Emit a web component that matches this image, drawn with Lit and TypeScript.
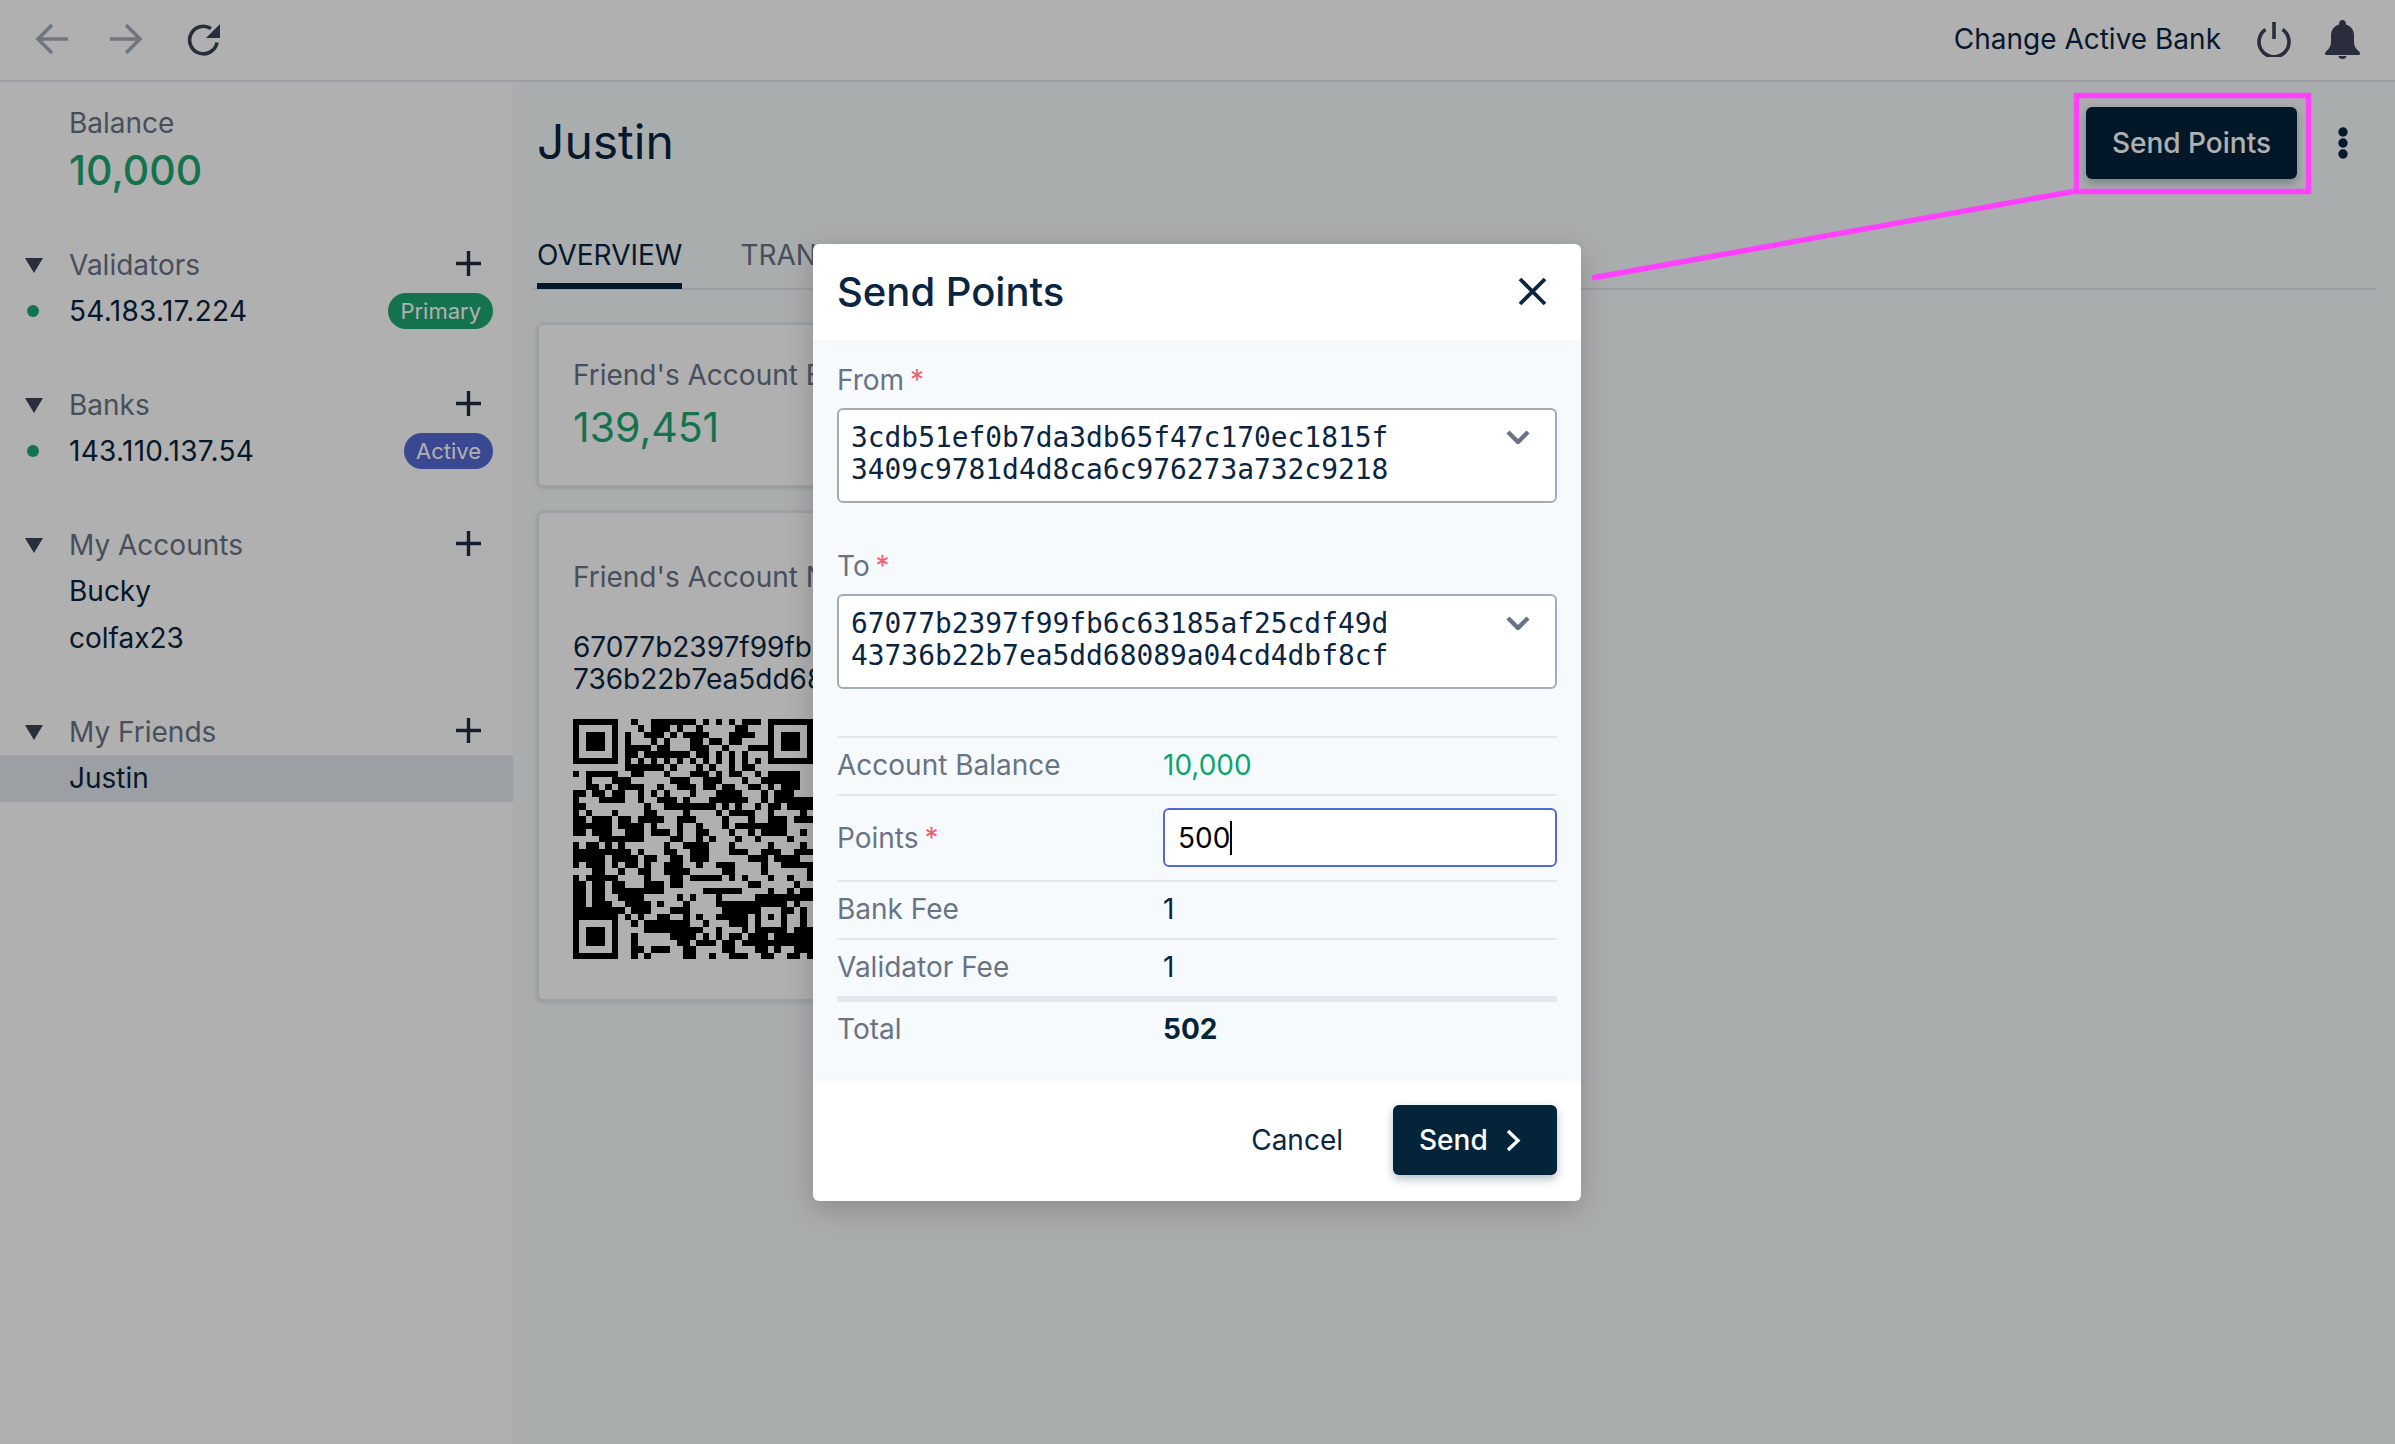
import { LitElement, html, css, svg } from "lit";
import { customElement } from "lit/decorators.js";

// QR modules, one entry per row, as column ranges
const QR_ROWS = [
  "0-6 9 12-18 20 22 24 26-28 30-36",
  "0 6 10 12-14 16 19 25-26 30 36",
  "0 2-4 6 8 11-13 15 17-20 24-27 30 32-34 36",
  "0 2-4 6 8 12 14 18-19 21-22 24-25 30 32-34 36",
  "0 2-4 6 8-11 13-14 18-20 23 27-29 30 32-34 36",
  "0 6 8-9 11-17 19-20 22 24 26 30 36",
  "0-6 8 10 12 14 16 18 20 22 24 26 28 30-36",
  "8-13 15 19 21 24 26-27",
  "0 2-6 9-10 14 18-20 22 24-25 28 30-34",
  "2 6-8 15-17 20-22 26 29-34",
  "2-3 5 7-10 13 16-18 20-21 23-24 27-28 30 32-34",
  "0-1 3-4 6-7 10 12 14 18 22-25 29 31-33",
  "0 4-7 10 13-15 17 21-26 29 31-36",
  "0-1 11 14-21 23 25 28 30-31 33-36",
  "0 2 6 11-12 17 22 24-27 30 35",
  "0-1 3-5 7-8 10-13 16-18 23 27 30-32 34-36",
  "0-5 7-10 12 16 19 23 25-32",
  "0-1 3-5 8-10 12-14 16 19-20 24 27 29-32 35",
  "4-10 15-16 19 21 25 28 33",
  "0 2-3 5 7 14 17-20 24 30 35",
  "0-8 10 14-15 18-20 24-26 29-31 34-36",
  "0-4 6-9 11-12 15-16 18-20 27-29 31-34",
  "0 2-4 6 8-9 11 14-16 19 22-24 29 32-36",
  "3-4 7 10-11 14-17 23-24 29 36",
  "0 2-6 11 15-16 18-22 24 26 30 33 36",
  "0-1 3-4 6-7 11-13 15-16 27-28 34",
  "0-1 3-4 6-13 20-25 30 33 35-36",
  "0-1 3-4 7-10 16 18 22 28-36",
  "0-1 3-5 8-11 13 17 22-32 34",
  "0-7 9-11 15-17 23-28 32-33 35",
  "0-6 8 10 13-14 17 19 22-26 28 30 32 35",
  "0 6 9 11-17 20 24-26 28 32 35",
  "0 2-4 6 11-19 22 26 28-32 34-36",
  "0 2-4 6 9 15-18 20 22 24-25 27-29 31-36",
  "0 2-4 6 9 16-17 19-21 23-24 26-36",
  "0 6 9-10 12-14 17-18 23-24 28-29 31 34-36",
  "0-6 9 11 17-18 21 24-26 29-30 33-34 36",
];

const qrPath = QR_ROWS.map((row, y) =>
  row
    .split(" ")
    .map((part) => {
      const [a, b] = part.split("-").map(Number);
      return `M${a} ${y}h${(b ?? a) - a + 1}v1h-${(b ?? a) - a + 1}z`;
    })
    .join("")
).join("");

const chevronDown = html`<svg class="chevron" width="24" height="14" viewBox="0 0 24 14">
  <path d="M2 2l10 10L22 2" fill="none" stroke="#697386" stroke-width="4.400" />
</svg>`;

const caretDown = html`<svg width="18" height="15" viewBox="0 0 18 15"><path d="M0 0h18L9 15z" fill="#3c4257" /></svg>`;

const plus = html`<svg class="plus" width="25" height="25" viewBox="0 0 25 25">
  <path d="M12.5 0v25M0 12.5h25" stroke="#1f2d40" stroke-width="3.400" />
</svg>`;

@customElement("app-root")
class AppRoot extends LitElement {
  static styles = css`
    :host {
      display: block;
      position: relative;
      width: 2395px;
      height: 1444px;
      overflow: hidden;
      background: #ffffff;
      color: #0a2540;
      font-family: Inter, "Liberation Sans", sans-serif;
      font-size: 28px;
      line-height: 32px;
    }
    * {
      box-sizing: border-box;
    }
    svg {
      display: block;
      flex: none;
    }
    .topbar {
      display: flex;
      align-items: center;
      height: 82px;
      padding: 0 35px 2px;
      border-bottom: 2px solid #e3e8ee;
    }
    .nav {
      display: flex;
      align-items: center;
      gap: 42px;
    }
    .nav .reload {
      margin-left: 2px;
    }
    .top-actions {
      display: flex;
      align-items: center;
      margin-left: auto;
    }
    .top-actions .power {
      margin-left: 36px;
    }
    .top-actions .bell {
      margin-left: 34px;
    }
    .layout {
      display: flex;
      height: 1362px;
    }
    .sidebar {
      width: 513px;
      flex: none;
      padding-top: 25px;
    }
    .balance {
      padding-left: 69px;
      margin-bottom: 44px;
    }
    .balance .label {
      color: #697386;
    }
    .balance .value {
      color: #1ea672;
      font-size: 41px;
      line-height: 56px;
      font-weight: 500;
      margin-top: 3px;
    }
    .group {
      margin-bottom: 47px;
    }
    .group-head {
      display: flex;
      align-items: center;
      height: 46px;
      padding: 0 32px 0 25px;
      color: #697386;
    }
    .group-head .name {
      margin-left: 26px;
    }
    .group-head .plus {
      margin-left: auto;
      margin-top: -4px;
    }
    .item {
      display: flex;
      align-items: center;
      height: 47px;
      padding: 0 20px 2px 69px;
    }
    .item.dotted {
      padding-left: 27px;
      letter-spacing: 0.3px;
    }
    .item.selected {
      background: #e3e8ee;
    }
    .dot {
      width: 12px;
      height: 12px;
      border-radius: 50%;
      background: #1ea672;
      margin-right: 30px;
    }
    .badge {
      margin-left: auto;
      height: 36px;
      padding: 0 12px;
      border-radius: 18px;
      font-size: 22px;
      line-height: 36px;
      letter-spacing: 0;
      color: #ffffff;
    }
    .badge.green {
      background: #1ea672;
    }
    .badge.indigo {
      background: #5469d4;
    }
    .main {
      flex: 1;
      background: #f6fbfc;
      padding: 25px 19px 0 24px;
    }
    .page-head {
      display: flex;
      align-items: center;
      height: 72px;
    }
    .page-head h1 {
      margin: -2px 0 0;
      font-size: 48px;
      line-height: 56px;
      font-weight: 400;
    }
    .btn {
      display: flex;
      align-items: center;
      border-radius: 6px;
      background: #04243a;
      color: #ffffff;
      font-weight: 500;
      box-shadow: 0 4px 10px rgba(4, 36, 58, 0.3);
    }
    .send-points {
      margin-left: auto;
      height: 72px;
      padding: 0 26px;
    }
    .more {
      margin: 0 28px 0 41px;
    }
    .tabs {
      display: flex;
      gap: 58px;
      margin: 60px 0 33px -4px;
      padding-left: 4px;
      border-bottom: 2px solid #e3e8ee;
      height: 51px;
    }
    .tab {
      color: #697386;
      height: 50px;
    }
    .tab.active {
      color: #0a2540;
      border-bottom: 6px solid #04243a;
      border-radius: 4px 4px 0 0;
    }
    .card {
      width: 720px;
      background: #ffffff;
      border-radius: 6px;
      border: 2px solid #e3e8ee;
      box-shadow: 0 1px 4px rgba(0, 0, 0, 0.14);
      padding: 34px 34px 33px;
      margin-bottom: 24px;
    }
    .card .label {
      color: #697386;
    }
    .card .value {
      color: #1ea672;
      font-size: 41px;
      line-height: 50px;
      margin-top: 11px;
    }
    .card.account {
      padding: 48px 34px 40px;
    }
    .card .addr {
      margin: 38px 0 24px;
    }
    .card .addr div {
      white-space: nowrap;
    }
    .overlay {
      position: absolute;
      inset: 0;
      display: flex;
      align-items: center;
      justify-content: center;
      background: rgba(0, 0, 0, 0.31);
    }
    .modal {
      width: 768px;
      margin-right: 1px;
      background: #ffffff;
      border-radius: 6px;
      overflow: hidden;
      box-shadow: 0 8px 30px rgba(0, 0, 0, 0.2);
    }
    .modal-head {
      display: flex;
      align-items: center;
      justify-content: space-between;
      height: 96px;
      padding: 0 34px 0 24px;
    }
    .modal-head h2 {
      margin: 0;
      font-size: 40px;
      line-height: 44px;
      font-weight: 500;
    }
    .modal-body {
      background: #f7fafc;
      padding: 24px 24px 23px;
    }
    .field-label {
      color: #697386;
      margin-bottom: 12px;
    }
    .req {
      color: #ed5f74;
      margin-left: -2px;
    }
    .select {
      display: flex;
      justify-content: space-between;
      height: 95px;
      padding: 12px 25px 0 12px;
      margin-bottom: 47px;
      background: #ffffff;
      border: 2px solid #a3acb9;
      border-radius: 6px;
      font-family: "DejaVu Sans Mono", "Liberation Mono", monospace;
      font-size: 27.9px;
      line-height: 32px;
      white-space: pre;
    }
    .select .chevron {
      margin-top: 8px;
    }
    .row {
      display: grid;
      grid-template-columns: 326px 1fr;
      align-items: center;
      height: 58px;
      padding-bottom: 1px;
      border-top: 2px solid #e3e8ee;
      color: #697386;
    }
    .row .val {
      color: #0a2540;
    }
    .row .val.green {
      color: #09a66d;
    }
    .row.input-row {
      height: 86px;
      padding-bottom: 0;
    }
    .row.total {
      height: 62px;
      border-top-width: 6px;
    }
    .row.total .val {
      font-weight: 700;
      color: #04243a;
    }
    .points {
      display: flex;
      align-items: center;
      height: 59px;
      padding-left: 13px;
      background: #ffffff;
      border: 2px solid #5469d4;
      border-radius: 6px;
      color: #000000;
    }
    .points .cursor {
      width: 2px;
      height: 34px;
      background: #000000;
    }
    .modal-foot {
      display: flex;
      align-items: center;
      justify-content: flex-end;
      height: 120px;
      padding: 0 24px 1px;
    }
    .cancel {
      margin-right: 50px;
    }
    .send {
      gap: 18px;
      height: 70px;
      width: 164px;
      padding-left: 26px;
    }
    .callout {
      position: absolute;
      left: 0;
      top: 0;
    }
  `;

  render() {
    return html`
      <div class="topbar">
        <div class="nav">
          <svg width="33" height="32" viewBox="0 0 33 32">
            <path d="M33 16H3M17 2L3 16l14 14" fill="none" stroke="#a3acb9" stroke-width="3.600" />
          </svg>
          <svg width="33" height="32" viewBox="0 0 33 32">
            <path d="M0 16h30M16 2l14 14-14 14" fill="none" stroke="#a3acb9" stroke-width="3.600" />
          </svg>
          <svg class="reload" width="33" height="33" viewBox="0 0 33 33">
            <path d="M24 5.500A13.800 13.800 0 1 0 30 19.500" fill="none" stroke="#3c4257" stroke-width="3.600" />
            <path d="M33 1v14H19z" fill="#3c4257" />
          </svg>
        </div>
        <div class="top-actions">
          <span>Change Active Bank</span>
          <svg class="power" width="34" height="35" viewBox="0 0 34 35">
            <path d="M8.500 7.500a15 15 0 1 0 17 0M17 0v17" fill="none" stroke="#3c4257" stroke-width="3.600" />
          </svg>
          <svg class="bell" width="35" height="39" viewBox="0 0 35 39">
            <path
              d="M17.500 0c-2 0-3.400 1.500-3.400 3.400v1.200C9 6 6 10.300 6 15.600v6.200c0 4-1.600 6.600-4.500 9.200C.5 31.900 0 32.600 0 33.400c0 .9.700 1.600 1.800 1.600h31.400c1.100 0 1.800-.7 1.800-1.600 0-.8-.5-1.500-1.500-2.400-2.900-2.600-4.500-5.200-4.500-9.200v-6.200c0-5.300-3-9.600-8.100-11V3.400C20.900 1.500 19.500 0 17.500 0z"
              fill="#3c4257"
            />
            <path d="M13.500 36h8c0 1.800-1.800 3-4 3s-4-1.200-4-3z" fill="#3c4257" />
          </svg>
        </div>
      </div>

      <div class="layout">
        <aside class="sidebar">
          <div class="balance">
            <div class="label">Balance</div>
            <div class="value">10,000</div>
          </div>
          <div class="group">
            <div class="group-head">${caretDown}<span class="name">Validators</span>${plus}</div>
            <div class="item dotted">
              <span class="dot"></span>54.183.17.224<span class="badge green">Primary</span>
            </div>
          </div>
          <div class="group">
            <div class="group-head">${caretDown}<span class="name">Banks</span>${plus}</div>
            <div class="item dotted">
              <span class="dot"></span>143.110.137.54<span class="badge indigo">Active</span>
            </div>
          </div>
          <div class="group">
            <div class="group-head">${caretDown}<span class="name">My Accounts</span>${plus}</div>
            <div class="item">Bucky</div>
            <div class="item">colfax23</div>
          </div>
          <div class="group">
            <div class="group-head">${caretDown}<span class="name">My Friends</span>${plus}</div>
            <div class="item selected">Justin</div>
          </div>
        </aside>

        <main class="main">
          <div class="page-head">
            <h1>Justin</h1>
            <div class="btn send-points">Send Points</div>
            <svg class="more" width="10" height="32" viewBox="0 0 10 32">
              <circle cx="5" cy="5" r="4.700" fill="#0a2540" />
              <circle cx="5" cy="16" r="4.700" fill="#0a2540" />
              <circle cx="5" cy="27" r="4.700" fill="#0a2540" />
            </svg>
          </div>
          <div class="tabs">
            <div class="tab active">OVERVIEW</div>
            <div class="tab">TRANSACTIONS</div>
          </div>
          <div class="card">
            <div class="label">Friend's Account Balance</div>
            <div class="value">139,451</div>
          </div>
          <div class="card account">
            <div class="label">Friend's Account Number</div>
            <div class="addr">
              <div>67077b2397f99fb6c63185af25cdf49d43</div>
              <div>736b22b7ea5dd68089a04cd4dbf8cf</div>
            </div>
            <svg width="240" height="240" viewBox="0 0 37 37" shape-rendering="crispEdges">
              ${svg`<path d=${qrPath} fill="#000" />`}
            </svg>
          </div>
        </main>
      </div>

      <div class="overlay">
        <div class="modal">
          <div class="modal-head">
            <h2>Send Points</h2>
            <svg width="29" height="29" viewBox="0 0 29 29">
              <path d="M2 2l25 25M27 2L2 27" fill="none" stroke="#0a2540" stroke-width="3.800" />
            </svg>
          </div>
          <div class="modal-body">
            <div class="field-label">From <span class="req">*</span></div>
            <div class="select">
              <span>3cdb51ef0b7da3db65f47c170ec1815f
3409c9781d4d8ca6c976273a732c9218</span>
              ${chevronDown}
            </div>
            <div class="field-label">To <span class="req">*</span></div>
            <div class="select">
              <span>67077b2397f99fb6c63185af25cdf49d
43736b22b7ea5dd68089a04cd4dbf8cf</span>
              ${chevronDown}
            </div>
            <div class="row">
              <span>Account Balance</span><span class="val green">10,000</span>
            </div>
            <div class="row input-row">
              <span>Points <span class="req">*</span></span>
              <div class="points">500<span class="cursor"></span></div>
            </div>
            <div class="row"><span>Bank Fee</span><span class="val">1</span></div>
            <div class="row"><span>Validator Fee</span><span class="val">1</span></div>
            <div class="row total"><span>Total</span><span class="val">502</span></div>
          </div>
          <div class="modal-foot">
            <span class="cancel">Cancel</span>
            <div class="btn send">
              Send
              <svg width="15" height="23" viewBox="0 0 15 23">
                <path d="M2 2l10 9.500L2 21" fill="none" stroke="#ffffff" stroke-width="3.400" />
              </svg>
            </div>
          </div>
        </div>
      </div>

      <svg class="callout" width="2395" height="1444" viewBox="0 0 2395 1444">
        <rect x="2076.500" y="95.500" width="232" height="96" fill="none" stroke="#ff40ff" stroke-width="5.500" />
        <path d="M2076 191L1592 278" fill="none" stroke="#ff40ff" stroke-width="5.500" />
      </svg>
    `;
  }
}

export { AppRoot };
declare global {
  interface HTMLElementTagNameMap {
    "app-root": AppRoot;
  }
}
